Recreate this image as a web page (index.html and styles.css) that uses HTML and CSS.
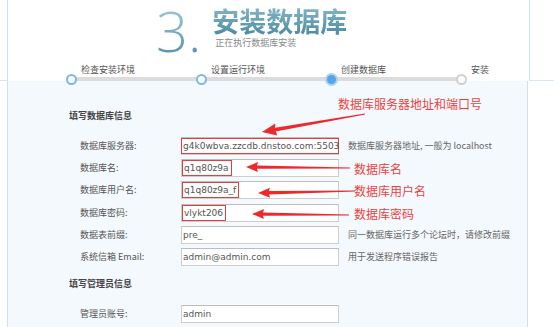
FILE: index.html
```html
<!DOCTYPE html>
<html lang="zh-CN">
<head>
  <meta charset="UTF-8">
  <title>安装数据库</title>
  <link rel="stylesheet" href="styles.css">
</head>
<body>
<div class="page">

  <header class="head">
    <div class="head-inner">
      <div class="title-block">
        <span class="step-no">3.</span>
        <div class="title-text">
          <h1 class="title">安装数据库</h1>
          <p class="subtitle">正在执行数据库安装</p>
        </div>
      </div>
      <div class="steps">
        <div class="step">
          <span class="step-label">检查安装环境</span>
          <div class="track"><i class="dot"></i><i class="bar"></i></div>
        </div>
        <div class="step">
          <span class="step-label">设置运行环境</span>
          <div class="track"><i class="dot"></i><i class="bar"></i></div>
        </div>
        <div class="step current">
          <span class="step-label">创建数据库</span>
          <div class="track"><i class="dot"></i><i class="bar"></i></div>
        </div>
        <div class="step todo last">
          <span class="step-label">安装</span>
          <div class="track"><i class="dot"></i></div>
        </div>
      </div>
    </div>
  </header>

  <main class="panel">
    <h2 class="section">填写数据库信息</h2>
    <div class="row">
      <span class="label">数据库服务器:</span>
      <div class="field"><span class="mark wide">g4k0wbva.zzcdb.dnstoo.com:5503</span></div>
      <span class="help">数据库服务器地址, 一般为 localhost</span>
    </div>
    <div class="row">
      <span class="label">数据库名:</span>
      <div class="field"><span class="mark">q1q80z9a</span></div>
    </div>
    <div class="row">
      <span class="label">数据库用户名:</span>
      <div class="field"><span class="mark">q1q80z9a_f</span></div>
    </div>
    <div class="row">
      <span class="label">数据库密码:</span>
      <div class="field"><span class="mark">vlykt206</span></div>
    </div>
    <div class="row">
      <span class="label">数据表前缀:</span>
      <div class="field">pre_</div>
      <span class="help">同一数据库运行多个论坛时，请修改前缀</span>
    </div>
    <div class="row">
      <span class="label">系统信箱 Email:</span>
      <div class="field">admin@admin.com</div>
      <span class="help">用于发送程序错误报告</span>
    </div>

    <h2 class="section second">填写管理员信息</h2>
    <div class="row">
      <span class="label">管理员账号:</span>
      <div class="field">admin</div>
    </div>
  </main>

  <!-- 标注：红色箭头和说明文字 -->
  <div class="notes">
    <svg class="arrows" width="554" height="327" viewBox="0 0 554 327">
      <polygon transform="translate(365 114) rotate(170.1)" points="0,-0.5 91,-1.9 90,-6 104.6,0 90,6 91,1.9 0,0.5"/>
      <polygon transform="translate(350 168) rotate(180.55)" points="0,-0.4 93,-1.7 92,-5 104,0 92,5 93,1.7 0,0.4"/>
      <polygon transform="translate(355 191) rotate(178.8)" points="0,-0.4 86,-1.7 85,-5 97,0 85,5 86,1.7 0,0.4"/>
      <polygon transform="translate(349 215) rotate(180.6)" points="0,-0.4 86,-1.7 85,-5 97,0 85,5 86,1.7 0,0.4"/>
    </svg>
    <span class="note note-host">数据库服务器地址和端口号</span>
    <span class="note note-name">数据库名</span>
    <span class="note note-user">数据库用户名</span>
    <span class="note note-pass">数据库密码</span>
  </div>

</div>
</body>
</html>
```

FILE: styles.css
```css
body {
  margin: 0;
  background: #fff;
  font-family: "Noto Sans CJK SC", "DejaVu Sans", sans-serif;
  font-size: 9px;
  color: #555;
}
.page {
  position: relative;
  width: 554px;
  height: 327px;
  overflow: hidden;
}
.head {
  border-bottom: 1px solid #d9e7f1;
}
.head-inner {
  margin-left: 7px;
  width: 521px;
  border-left: 1px solid #d3e1eb;
  border-right: 1px solid #d3e1eb;
  background: #fff;
}
.title-block {
  display: flex;
  height: 64px;
  padding-left: 146px;
  box-sizing: border-box;
}
.step-no {
  padding: 2px 2px 0;
  font-family: "Open Sans", "DejaVu Sans", sans-serif;
  font-weight: 300;
  font-size: 56px;
  line-height: 56px;
  background: linear-gradient(to bottom, #aacddd, #4f8aa3);
  -webkit-background-clip: text;
  background-clip: text;
  color: transparent;
}
.title-text {
  margin-left: 9px;
  padding-top: 6px;
}
.title {
  margin: 0;
  font-size: 27px;
  font-weight: 700;
  line-height: 30px;
  background: linear-gradient(to bottom, #84b7c9, #4b8aa2);
  -webkit-background-clip: text;
  background-clip: text;
  color: transparent;
}
.subtitle {
  margin: 1px 0 0 3px;
  font-size: 9px;
  line-height: 12px;
  color: #8a8a8a;
}
.steps {
  display: flex;
  padding-left: 64px;
  margin-bottom: -1px;
}
.step {
  width: 130px;
}
.step.last {
  width: 50px;
}
.step-label {
  display: block;
  padding-left: 9px;
  line-height: 12px;
  color: #555;
}
.track {
  display: flex;
  align-items: center;
  height: 4px;
  margin-top: 1px;
}
.dot {
  position: relative;
  z-index: 1;
  flex: none;
  width: 11px;
  height: 11px;
  margin-left: -6px;
  box-sizing: border-box;
  border: 2px solid #78b8ea;
  border-radius: 50%;
  background: #fff;
}
.bar {
  flex: 1;
  height: 4px;
  margin-left: -1px;
  background: #dcdcdc;
}
.current .dot {
  width: 13px;
  height: 13px;
  margin-left: -7px;
  border: 2px solid #a8d3f3;
  background: #55a6e6;
}
.todo .dot {
  border-color: #d0d0d0;
}
.panel {
  margin-left: 7px;
  width: 521px;
  height: 260px;
  padding: 28px 0 0 61px;
  box-sizing: border-box;
  border-left: 1px solid #d3e1eb;
  border-right: 1px solid #d3e1eb;
  background: #f4f9fd;
}
.section {
  margin: 0 0 14px;
  font-size: 9px;
  font-weight: 700;
  line-height: 14px;
  color: #444;
}
.section.second {
  margin-top: 11px;
}
.row {
  display: flex;
  align-items: center;
  height: 18px;
  margin-bottom: 4.2px;
  padding-left: 11px;
}
.label {
  width: 101px;
  flex: none;
  line-height: 12px;
}
.field {
  flex: none;
  width: 158px;
  height: 18px;
  box-sizing: border-box;
  padding: 0 1px;
  border: 1px solid #cdcdcd;
  border-top-color: #bdbdbd;
  background: #fff;
  font-family: "DejaVu Sans", sans-serif;
  font-size: 9px;
  line-height: 16px;
  color: #555;
  white-space: nowrap;
}
.mark {
  display: inline-block;
  height: 16px;
  padding: 0 2px 0 1px;
  margin-left: -1px;
  box-sizing: border-box;
  border: 1px solid #e2403f;
  line-height: 14px;
}
.mark.wide {
  width: 158px;
  margin-left: -2px;
}
.help {
  margin-left: 9px;
  line-height: 12px;
  color: #666;
  white-space: nowrap;
}
.notes {
  position: absolute;
  top: 0;
  left: 0;
  width: 554px;
  height: 327px;
  pointer-events: none;
}
.arrows {
  position: absolute;
  top: 0;
  left: 0;
  fill: #ec2a2c;
}
.note {
  position: absolute;
  font-size: 12px;
  line-height: 14px;
  color: #ee3f3f;
  white-space: nowrap;
}
.note-host { left: 338px; top: 97px; }
.note-name { left: 354px; top: 162px; }
.note-user { left: 354px; top: 184px; }
.note-pass { left: 354px; top: 207px; }
```
